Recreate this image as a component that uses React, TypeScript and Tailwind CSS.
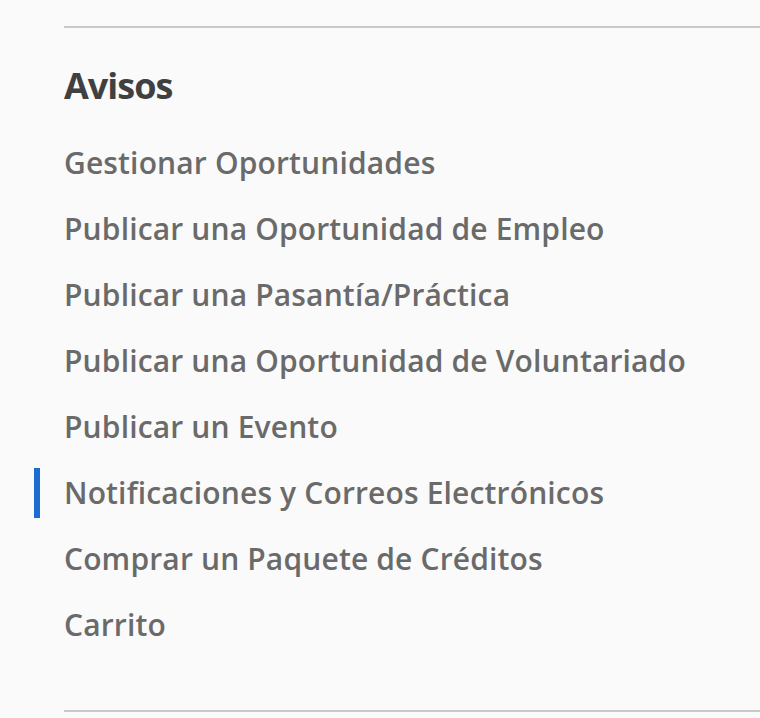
import React from "react";

const items = [
  "Gestionar Oportunidades",
  "Publicar una Oportunidad de Empleo",
  "Publicar una Pasantía/Práctica",
  "Publicar una Oportunidad de Voluntariado",
  "Publicar un Evento",
  "Notificaciones y Correos Electrónicos",
  "Comprar un Paquete de Créditos",
  "Carrito",
];

export default function App() {
  return (
    <div className="w-[760px] h-[718px] bg-[#fafafa] pt-[26px] pl-[64px] font-['Open_Sans',sans-serif] overflow-hidden">
      <div className="h-[2px] bg-[#c9c9c9]" />
      <h2 className="mt-[33px] text-[36px] leading-[50px] font-bold text-[#404040] tracking-[-1px]">Avisos</h2>
      <ul className="mt-[27px] flex flex-col gap-[16px]">
        {items.map((t, i) => (
          <li key={t} className="relative h-[50px] flex items-center">
            {i === 5 && <span className="absolute left-[-30px] top-0 h-[50px] w-[6px] bg-[#1d6cd0]" />}
            <a className="text-[30px] leading-[50px] font-semibold text-[#6a6a6a] whitespace-nowrap tracking-[0.15px]">{t}</a>
          </li>
        ))}
      </ul>
      <div className="mt-[60px] h-[2px] bg-[#c9c9c9]" />
    </div>
  );
}
